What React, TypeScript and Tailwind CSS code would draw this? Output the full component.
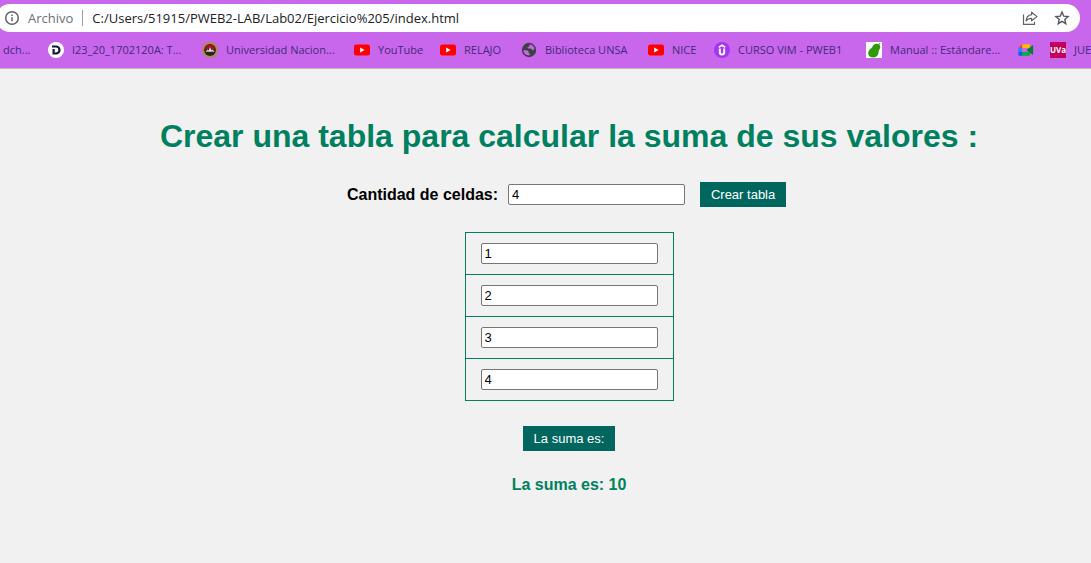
import { useState } from "react";
import type { ReactNode } from "react";

function Svg({ children }: { children: ReactNode }) {
  return (
    <svg className="size-4 shrink-0" viewBox="0 0 16 16" aria-hidden="true">
      {children}
    </svg>
  );
}

function YouTubeIcon() {
  return (
    <Svg>
      <rect y="2.4" width="16" height="11.2" rx="2.4" fill="#ff0000" />
      <path d="M6.2 5.6 10.6 8 6.2 10.4z" fill="#fff" />
    </Svg>
  );
}

function DriveLetterIcon() {
  return (
    <Svg>
      <circle cx="8" cy="8" r="8" fill="#fff" />
      <path d="M4 4.500H8a3.500 3.500 0 0 1 0 7H5.600V7" fill="none" stroke="#14143c" strokeWidth="2.200" />
    </Svg>
  );
}

function UniversityIcon() {
  return (
    <Svg>
      <circle cx="8" cy="8" r="8" fill="#b08a50" />
      <circle cx="8" cy="8" r="5.9" fill="#2b2422" />
      <path d="M2.9 7.6a5.1 5.1 0 0 1 10.2 0z" fill="#a3131c" />
      <path d="M3.6 9.8 5.4 7.4l1.4 1L8 5l1.4 3.2 1.4-.8 1.6 2.4z" fill="#e8e4dc" />
      <path d="M5.4 8.6h1v1.2h-1zM9.6 8.6h1v1.2h-1z" fill="#3a8f9b" />
    </Svg>
  );
}

function GlobeIcon() {
  return (
    <Svg>
      <circle cx="8" cy="8" r="7.2" fill="#3f4145" />
      <path
        d="M2.400 8.200H6l1.600 1.200v1.400l1.200.6-.4 2C5.200 13.400 2.600 11.400 2.400 8.200zM8.400 2.600c2.400 0 4.400 1.600 5 3.800l-1.200 1.800-1.600-.6-.6-1H7.200L6.400 5.200l2-.8z"
        fill="#c967ec"
      />
    </Svg>
  );
}

function UdemyIcon() {
  return (
    <Svg>
      <circle cx="8" cy="8" r="8" fill="#a435f0" />
      <path d="M4.800 5.200 8 3.200l3.200 2" fill="none" stroke="#fff" strokeWidth="1.600" />
      <path d="M5.800 6.600v3.600a2.200 2.200 0 0 0 4.400 0V6.600" fill="none" stroke="#fff" strokeWidth="2" />
    </Svg>
  );
}

function PearIcon() {
  return (
    <Svg>
      <path d="M0 0h16v16H0z" fill="#fff" />
      <path
        d="M14.600 1.400 13.200 2.600c1.600 1.400 1.400 3.400.2 4.800-.9 1-.7 2.200-1 3.800-.5 2.800-2.600 4.200-5.200 4.200-3 0-5-1.600-5-4.200 0-2.500 1.600-4 3-5 1.200-.9 1.300-2.200 2.400-3.200 1.300-1.200 3.200-1.500 4.800-.8L13.800.8z"
        fill="#2f9a08"
      />
    </Svg>
  );
}

function MeetIcon() {
  return (
    <Svg>
      <path d="M4.100 2.200H11a1 1 0 0 1 1 1v2.700H4.100z" fill="#ffba00" />
      <path d="M.4 5.900 4.100 2.200v3.700z" fill="#ea4335" />
      <path d="M.4 5.900h3.700v4.200H.4z" fill="#2684fc" />
      <path d="M.4 10.100h3.700v3.700H1.600a1.200 1.200 0 0 1-1.200-1.200z" fill="#0066da" />
      <path d="M4.100 10.100H8.600L12 9v3.600a1.200 1.200 0 0 1-1.200 1.200H4.100z" fill="#00ac47" />
      <path d="M8.600 8 14.200 3.400c.5-.4 1 0 1 .5v8.200c0 .6-.5.900-1 .5z" fill="#00832d" />
    </Svg>
  );
}

function UvaIcon() {
  return (
    <span className="flex size-4 shrink-0 items-center justify-center bg-[#c4005a] text-[8px] leading-none font-bold text-white">
      UVa
    </span>
  );
}

const bookmarks: { label: string; icon?: ReactNode; width: string }[] = [
  { label: "dch...", width: "w-[45px]" },
  { label: "I23_20_1702120A: T...", icon: <DriveLetterIcon />, width: "w-[154px]" },
  { label: "Universidad Nacion...", icon: <UniversityIcon />, width: "w-[152px]" },
  { label: "YouTube", icon: <YouTubeIcon />, width: "w-[86px]" },
  { label: "RELAJO", icon: <YouTubeIcon />, width: "w-[81px]" },
  { label: "Biblioteca UNSA", icon: <GlobeIcon />, width: "w-[127px]" },
  { label: "NICE", icon: <YouTubeIcon />, width: "w-[66px]" },
  { label: "CURSO VIM - PWEB1", icon: <UdemyIcon />, width: "w-[152px]" },
  { label: "Manual :: Estándare...", icon: <PearIcon />, width: "w-[152px]" },
  { label: "", icon: <MeetIcon />, width: "w-8" },
  { label: "JUE", icon: <UvaIcon />, width: "w-[44px]" },
];

function BrowserBar() {
  return (
    <header className="overflow-hidden border-b border-[#b9b9bb] bg-[#c967ec] pt-1 font-['Open_Sans','Noto_Sans',sans-serif]">
      <div className="-ml-1 mr-[11px] flex h-7 items-center rounded-full bg-white pr-[10px] pl-2">
        <svg className="size-4 shrink-0" viewBox="0 0 16 16" fill="none" stroke="#5f6368" aria-hidden="true">
          <circle cx="8" cy="8" r="6.300" strokeWidth="1.500" />
          <path d="M8 7.200v4M8 4.600v1.500" strokeWidth="1.500" />
        </svg>
        <span className="ml-2 text-[13px] leading-6 text-[#6b6f73]">Archivo</span>
        <span className="mx-[9px] h-4 w-px bg-[#9a9da1]" />
        <input
          aria-label="Dirección"
          defaultValue="C:/Users/51915/PWEB2-LAB/Lab02/Ejercicio%205/index.html"
          className="h-6 min-w-0 flex-1 bg-transparent text-[13px] text-[#202124] outline-none"
        />
        <button type="button" aria-label="Compartir" className="mr-4">
          <svg className="size-4" viewBox="0 0 16 16" fill="none" stroke="#5f6368" strokeWidth="1.200" aria-hidden="true">
            <path d="M1.500 4.500v9.900h11v-2.600" />
            <path d="M9.600 2.200 15 6.600l-5.400 4.200V8.300c-2.600 0-4.200.7-5.500 2.500.3-3.500 2-5.700 5.500-6.100z" strokeLinejoin="round" />
          </svg>
        </button>
        <button type="button" aria-label="Añadir a marcadores">
          <svg className="size-4" viewBox="0 0 16 16" fill="none" stroke="#55595e" strokeWidth="1.400" aria-hidden="true">
            <path d="m8 2 1.700 4.100 4.400.4-3.300 2.900 1 4.300L8 11.400l-3.800 2.300 1-4.300-3.300-2.900 4.400-.4z" />
          </svg>
        </button>
      </div>
      <nav aria-label="Marcadores" className="flex h-9 items-center pl-[3px]">
        {bookmarks.map((b, i) => (
          <a
            key={i}
            href="#"
            aria-label={b.label || "Meet"}
            className={`flex shrink-0 items-center gap-2 text-[11px] whitespace-nowrap text-[#3f2a7c] ${b.width}`}
          >
            {b.icon}
            {b.label && <span>{b.label}</span>}
          </a>
        ))}
      </nav>
    </header>
  );
}

const fieldClass =
  "h-[21px] w-[177px] rounded-[2px] border border-[#767676] bg-white px-[3px] text-[13px] text-black";
const buttonClass = "h-[25px] bg-[#00665e] text-center text-[13px] text-white";

export default function App() {
  const [count, setCount] = useState("4");
  const [cells, setCells] = useState(["1", "2", "3", "4"]);
  const [total, setTotal] = useState(10);

  const createTable = () => setCells(Array.from({ length: Math.max(0, Number(count) || 0) }, () => ""));
  const addUp = () => setTotal(cells.reduce((sum, v) => sum + (Number(v) || 0), 0));

  return (
    <div className="min-h-screen bg-[#f1f1f1]">
      <BrowserBar />
      <main className="flex flex-col items-center pt-12 pb-8 pl-[47px] font-['Liberation_Sans',Arial,sans-serif] text-base">
        <h1 className="text-[32px] leading-[38px] font-bold text-[#008060]">
          Crear una tabla para calcular la suma de sus valores :
        </h1>
        <div className="mt-[27px] flex h-[25px] items-center pr-[5px]">
          <label htmlFor="count" className="mr-[10px] font-bold text-black">
            Cantidad de celdas:
          </label>
          <input
            id="count"
            value={count}
            onChange={(e) => setCount(e.target.value)}
            className={`mr-[15px] ${fieldClass}`}
          />
          <button type="button" onClick={createTable} className={`w-[86px] ${buttonClass}`}>
            Crear tabla
          </button>
        </div>
        <table className="mt-[25px] border-collapse">
          <tbody>
            {cells.map((value, i) => (
              <tr key={i}>
                <td className="border border-[#008060] px-[15px] py-[10px]">
                  <input
                    aria-label={`Celda ${i + 1}`}
                    value={value}
                    onChange={(e) => setCells(cells.map((v, j) => (j === i ? e.target.value : v)))}
                    className={`block ${fieldClass}`}
                  />
                </td>
              </tr>
            ))}
          </tbody>
        </table>
        <button type="button" onClick={addUp} className={`mt-[25px] w-[92px] ${buttonClass}`}>
          La suma es:
        </button>
        <p className="mt-[22px] font-bold text-[#008060]">La suma es: {total}</p>
      </main>
    </div>
  );
}
